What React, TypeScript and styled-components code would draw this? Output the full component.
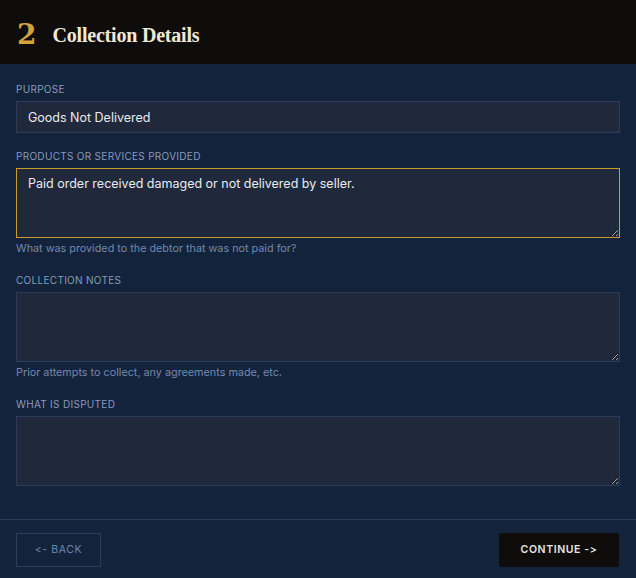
import React from "react";
import styled, { createGlobalStyle } from "styled-components";

const GlobalStyle = createGlobalStyle`
  html, body {
    margin: 0;
    padding: 0;
    background: #13233b;
  }
  * {
    box-sizing: border-box;
  }
`;

const Page = styled.div`
  width: 636px;
  height: 578px;
  display: flex;
  flex-direction: column;
  background: #13233b;
  font-family: Inter, "Liberation Sans", sans-serif;
`;

const Header = styled.div`
  height: 64px;
  background: #0e0d0b;
  display: flex;
  flex-direction: row;
  align-items: center;
  padding: 6px 17px 0 17px;
  gap: 16px;
`;

const StepNumber = styled.span`
  font-family: "DejaVu Serif", "Liberation Serif", serif;
  font-weight: bold;
  font-size: 28px;
  color: #d4a33a;
  line-height: 1;
`;

const Title = styled.h1`
  margin: 0;
  font-family: "Liberation Serif", serif;
  font-weight: bold;
  font-size: 20px;
  letter-spacing: -0.2px;
  color: #f1e8d6;
`;

const Body = styled.div`
  flex: 1;
  display: flex;
  flex-direction: column;
  padding: 19px 16px 0 16px;
`;

const Field = styled.div`
  display: flex;
  flex-direction: column;
  margin-bottom: 17px;
`;

const Label = styled.label`
  font-size: 10px;
  line-height: 12px;
  letter-spacing: 0.3px;
  text-transform: uppercase;
  color: #8a9abd;
  margin-bottom: 6px;
`;

const TextInput = styled.input`
  height: 32px;
  width: 100%;
  background: #1f293b;
  border: 1px solid #2d3c5c;
  color: #e8ebf0;
  font-family: inherit;
  font-size: 12.5px;
  padding: 0 11px;
  outline: none;
`;

const TextArea = styled.textarea<{ $focused?: boolean }>`
  height: 70px;
  width: 100%;
  resize: vertical;
  background: #1f293b;
  border: 1px solid ${(p) => (p.$focused ? "#c99c2a" : "#2d3c5c")};
  color: #e8ebf0;
  font-family: inherit;
  font-size: 12.5px;
  padding: 7px 11px;
  outline: none;
  display: block;
`;

const Hint = styled.div`
  font-size: 10.8px;
  line-height: 12px;
  color: #7588ae;
  margin-top: 5px;
  margin-bottom: 2px;
`;

const Footer = styled.div`
  border-top: 1px solid #2b3a58;
  height: 59px;
  display: flex;
  flex-direction: row;
  align-items: center;
  justify-content: space-between;
  padding: 1px 17px 0 16px;
`;

const BackButton = styled.button`
  height: 34px;
  width: 85px;
  background: transparent;
  border: 1px solid #2d3c5c;
  color: #7186b0;
  font-family: inherit;
  font-size: 10.5px;
  letter-spacing: 0.6px;
  text-transform: uppercase;
`;

const ContinueButton = styled.button`
  height: 34px;
  width: 120px;
  background: #0e0d0b;
  border: none;
  border-radius: 2px;
  color: #e8e6e0;
  font-family: inherit;
  font-weight: 600;
  font-size: 10.5px;
  letter-spacing: 0.6px;
  text-transform: uppercase;
`;

export default function App() {
  return (
    <>
      <GlobalStyle />
      <Page>
        <Header>
          <StepNumber>2</StepNumber>
          <Title>Collection Details</Title>
        </Header>
        <Body>
          <Field>
            <Label>Purpose</Label>
            <TextInput defaultValue="Goods Not Delivered" />
          </Field>
          <Field>
            <Label>Products or Services Provided</Label>
            <TextArea
              $focused
              defaultValue="Paid order received damaged or not delivered by seller."
            />
            <Hint>What was provided to the debtor that was not paid for?</Hint>
          </Field>
          <Field>
            <Label>Collection Notes</Label>
            <TextArea />
            <Hint>Prior attempts to collect, any agreements made, etc.</Hint>
          </Field>
          <Field>
            <Label>What Is Disputed</Label>
            <TextArea />
          </Field>
        </Body>
        <Footer>
          <BackButton>{"<- Back"}</BackButton>
          <ContinueButton>{"Continue ->"}</ContinueButton>
        </Footer>
      </Page>
    </>
  );
}
